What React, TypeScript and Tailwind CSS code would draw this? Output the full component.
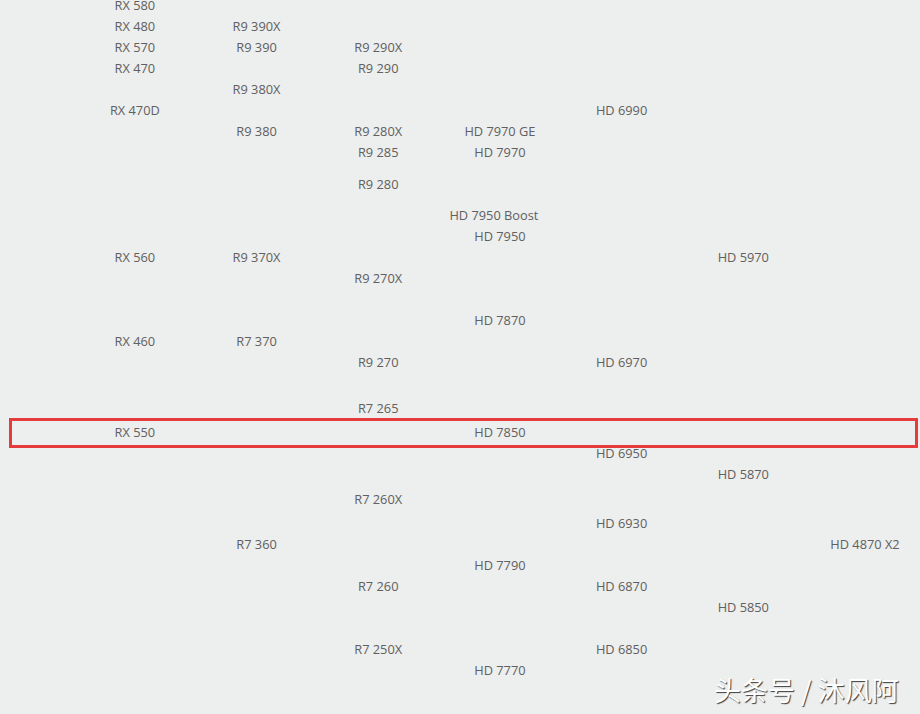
type Row = { h: string; cells: [number, string][] };

// column index 1..7, heights = distance to the next row
const rows: Row[] = [
  { h: "h-[21px]", cells: [[1, "RX 580"]] },
  { h: "h-[21px]", cells: [[1, "RX 480"], [2, "R9 390X"]] },
  { h: "h-[21px]", cells: [[1, "RX 570"], [2, "R9 390"], [3, "R9 290X"]] },
  { h: "h-[21px]", cells: [[1, "RX 470"], [3, "R9 290"]] },
  { h: "h-[21px]", cells: [[2, "R9 380X"]] },
  { h: "h-[21px]", cells: [[1, "RX 470D"], [5, "HD 6990"]] },
  { h: "h-[21px]", cells: [[2, "R9 380"], [3, "R9 280X"], [4, "HD 7970 GE"]] },
  { h: "h-[32px]", cells: [[3, "R9 285"], [4, "HD 7970"]] },
  { h: "h-[31px]", cells: [[3, "R9 280"]] },
  { h: "h-[21px]", cells: [[4, "HD 7950 Boost"]] },
  { h: "h-[21px]", cells: [[4, "HD 7950"]] },
  { h: "h-[21px]", cells: [[1, "RX 560"], [2, "R9 370X"], [6, "HD 5970"]] },
  { h: "h-[42px]", cells: [[3, "R9 270X"]] },
  { h: "h-[21px]", cells: [[4, "HD 7870"]] },
  { h: "h-[21px]", cells: [[1, "RX 460"], [2, "R7 370"]] },
  { h: "h-[46px]", cells: [[3, "R9 270"], [5, "HD 6970"]] },
  { h: "h-[24px]", cells: [[3, "R7 265"]] },
  { h: "h-[21px]", cells: [[1, "RX 550"], [4, "HD 7850"]] },
  { h: "h-[21px]", cells: [[5, "HD 6950"]] },
  { h: "h-[25px]", cells: [[6, "HD 5870"]] },
  { h: "h-[24px]", cells: [[3, "R7 260X"]] },
  { h: "h-[21px]", cells: [[5, "HD 6930"]] },
  { h: "h-[21px]", cells: [[2, "R7 360"], [7, "HD 4870 X2"]] },
  { h: "h-[21px]", cells: [[4, "HD 7790"]] },
  { h: "h-[21px]", cells: [[3, "R7 260"], [5, "HD 6870"]] },
  { h: "h-[42px]", cells: [[6, "HD 5850"]] },
  { h: "h-[21px]", cells: [[3, "R7 250X"], [5, "HD 6850"]] },
  { h: "h-[21px]", cells: [[4, "HD 7770"]] },
];

const colStart = [
  "",
  "col-start-1",
  "col-start-2",
  "col-start-3",
  "col-start-4",
  "col-start-5",
  "col-start-6",
  "col-start-7",
];

export default function App() {
  return (
    <div className="relative w-[920px] h-[714px] overflow-hidden bg-[#edeeee] font-['Open_Sans','Noto_Sans',sans-serif] text-[12.8px] text-[#606060]">
      <div className="-mt-[5px] pl-[74px]">
        {rows.map((r, i) => (
          <div key={i} className={`grid grid-cols-[repeat(7,121.7px)] ${r.h}`}>
            {r.cells.map(([c, t]) => (
              <div
                key={t}
                className={`${colStart[c]} row-start-1 text-center leading-[21px] whitespace-nowrap ${t === "HD 7950 Boost" ? "pr-[12px]" : ""}`}
              >
                {t}
              </div>
            ))}
          </div>
        ))}
      </div>

      {/* highlight box */}
      <div className="absolute left-[9px] top-[418px] w-[909px] h-[30px] border-[3px] border-[#e63b3b]" />

      {/* watermark */}
      <div className="absolute left-[714px] top-[672px] text-[27px] leading-[36px] text-white font-['Noto_Sans_CJK_SC',sans-serif] [text-shadow:1px_1px_1px_rgba(0,0,0,0.75)] whitespace-nowrap">
        头条号 / 沐风阿
      </div>
    </div>
  );
}
